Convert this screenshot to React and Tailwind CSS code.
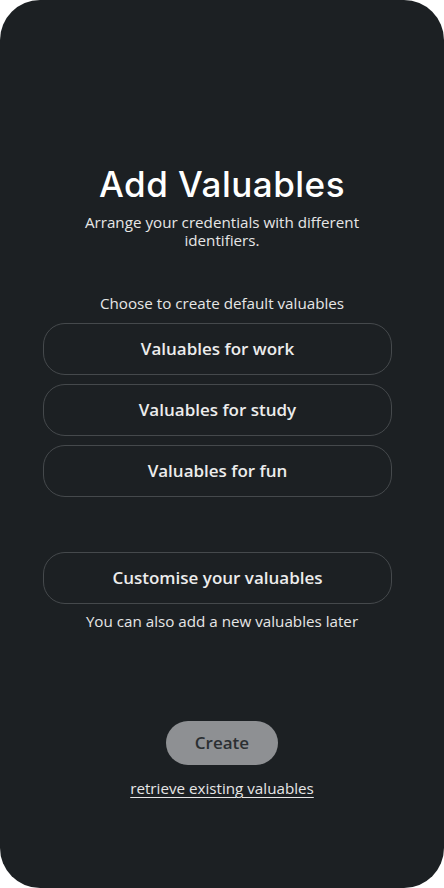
export default function App() {
  const btn =
    "h-[52px] w-full rounded-[22px] border border-[#45494c] flex items-center justify-center text-[17px] font-semibold text-[#ececec]";
  return (
    <div className="w-[444px] h-[888px] bg-white">
      <div
        className="w-[444px] h-[888px] bg-[#1c2023] rounded-[40px] flex flex-col items-center text-white"
        style={{ fontFamily: '"Open Sans", "Noto Sans", sans-serif' }}
      >
        <h1
          className="mt-[161px] text-[35px] leading-[46px] font-medium tracking-[0.5px] text-white"
          style={{ fontFamily: 'Inter, "Noto Sans", sans-serif' }}
        >
          Add Valuables
        </h1>
        <p className="mt-[6px] w-[300px] text-center text-[15.2px] leading-[18px] text-[#e6e6e6]">
          Arrange your credentials with different identifiers.
        </p>
        <p className="mt-[44px] text-[15.2px] leading-[20px] text-[#e6e6e6]">
          Choose to create default valuables
        </p>
        <div className="mt-[10px] self-start ml-[43px] w-[349px] flex flex-col gap-[9px]">
          <div className={btn}>Valuables for work</div>
          <div className={btn}>Valuables for study</div>
          <div className={btn}>Valuables for fun</div>
        </div>
        <div className="mt-[55px] self-start ml-[43px] w-[349px]">
          <div className={btn}>Customise your valuables</div>
        </div>
        <p className="mt-[7px] text-[15.2px] leading-[20px] text-[#e6e6e6]">
          You can also add a new valuables later
        </p>
        <div className="mt-[90px] w-[112px] h-[44px] rounded-full bg-[#8e9093] flex items-center justify-center text-[17px] font-semibold text-[#2b2f32]">
          Create
        </div>
        <p className="mt-[13px] text-[15.2px] leading-[20px] text-[#e6e6e6] underline underline-offset-[3px]">
          retrieve existing valuables
        </p>
      </div>
    </div>
  );
}
